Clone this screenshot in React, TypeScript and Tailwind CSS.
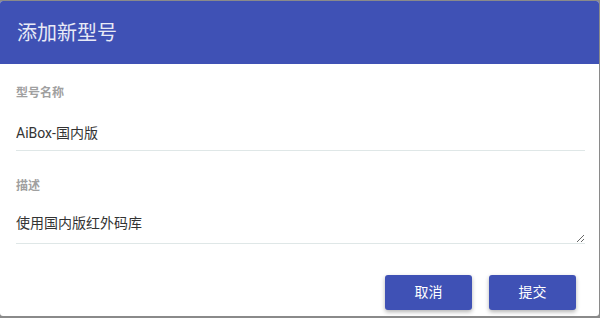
import * as React from "react";

const FONT = '"Roboto", "Noto Sans CJK SC", sans-serif';

export default function App() {
  return (
    <div className="h-[318px] w-[600px] overflow-hidden bg-[#8a8a8a] pt-px" style={{ fontFamily: FONT }}>
      <div className="h-[315px] w-[599px] overflow-hidden rounded-[3px] bg-white">
        <div className="flex h-[63px] items-center bg-[#3f51b5] px-[17px] text-[20px] text-[#e8eaf6]">
          添加新型号
        </div>

        <div className="pl-4 pr-[14px] pt-[21px]">
          <div className="text-[12px] font-bold leading-[16px] text-[#a0a0a0]">型号名称</div>
          <input
            readOnly
            value="AiBox-国内版"
            className="block w-full border-b border-[#dfe7e7] pb-[7px] pt-[22px] text-[14px] leading-[20px] text-[#333] outline-none"
          />

          <div className="mt-[27px] text-[12px] font-bold leading-[16px] text-[#a0a0a0]">描述</div>
          <textarea
            readOnly
            value="使用国内版红外码库"
            className="block h-[50px] w-full resize-y border-b border-[#dfe7e7] pb-[10px] pt-[19px] text-[14px] leading-[20px] text-[#333] outline-none"
          />
        </div>

        <div className="mt-[31px] flex justify-end gap-[17px] pr-[23px]">
          <button className="h-[35px] w-[87px] rounded-[3px] bg-[#3f51b5] text-[14px] text-white shadow-[0_2px_4px_rgba(0,0,0,0.3)]">
            取消
          </button>
          <button className="h-[35px] w-[87px] rounded-[3px] bg-[#3f51b5] text-[14px] text-white shadow-[0_2px_4px_rgba(0,0,0,0.3)]">
            提交
          </button>
        </div>
      </div>
    </div>
  );
}
